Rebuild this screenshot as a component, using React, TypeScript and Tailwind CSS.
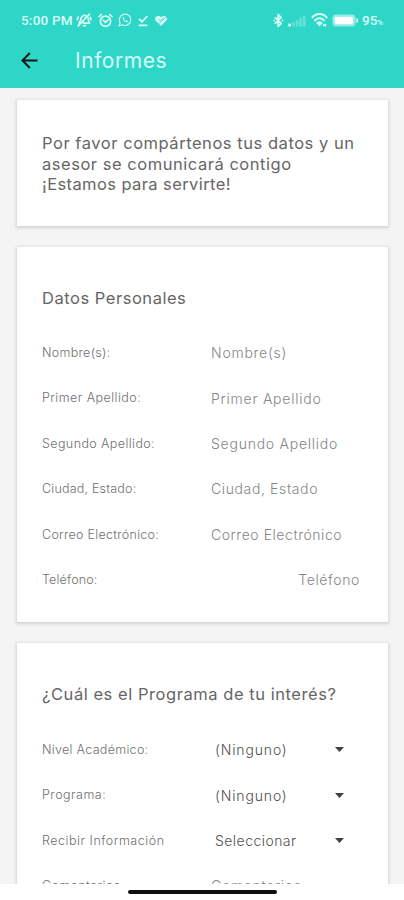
import type { ReactNode } from "react"

type Campo = {
  etiqueta: string
  etiquetaClass: string
  valor: string
  valorClass: string
}

const datosPersonales: Campo[] = [
  { etiqueta: "Nombre(s):", etiquetaClass: "tracking-[0.3px]", valor: "Nombre(s)", valorClass: "tracking-[0.75px]" },
  { etiqueta: "Primer Apellido:", etiquetaClass: "tracking-[0.45px]", valor: "Primer Apellido", valorClass: "tracking-[0.77px]" },
  { etiqueta: "Segundo Apellido:", etiquetaClass: "tracking-[0.4px]", valor: "Segundo Apellido", valorClass: "tracking-[0.75px]" },
  { etiqueta: "Ciudad, Estado:", etiquetaClass: "tracking-[0.2px]", valor: "Ciudad, Estado", valorClass: "tracking-[0.62px]" },
  { etiqueta: "Correo Electrónico:", etiquetaClass: "tracking-[0.28px]", valor: "Correo Electrónico", valorClass: "tracking-[0.55px]" },
  { etiqueta: "Teléfono:", etiquetaClass: "tracking-[0.15px]", valor: "Teléfono", valorClass: "tracking-[0.65px] ml-auto mr-[3px]" },
]

const programa: Campo[] = [
  { etiqueta: "Nivel Académico:", etiquetaClass: "tracking-[0.3px]", valor: "(Ninguno)", valorClass: "tracking-[0.85px]" },
  { etiqueta: "Programa:", etiquetaClass: "tracking-[0.5px]", valor: "(Ninguno)", valorClass: "tracking-[0.85px]" },
  { etiqueta: "Recibir Información", etiquetaClass: "tracking-[0.53px]", valor: "Seleccionar", valorClass: "tracking-[0.45px]" },
]

function StatusBar() {
  return (
    <div className="flex h-10 items-center pl-[21px] pr-5 text-[#d9fdf8]">
      <span className="w-[53px] shrink-0 whitespace-nowrap font-[Roboto] text-[13.5px] font-medium tracking-[0.2px]">5:00 PM</span>
      <svg className="ml-[2px] h-4 w-4" viewBox="0 0 16 16" fill="none" stroke="currentColor" strokeWidth="1.7" strokeLinecap="round" strokeLinejoin="round">
        <path d="M3 10.8 4.6 8.4C4.8 4.6 7.2 3 9.6 3.6M12.2 6c.5 2-.2 3.200 1.400 5.200H7.400M2.200 13.800 13.400 2.200M7.400 13.600h2.200M1.200 7.600l1-2.600M15 7.400l-.6-2" />
      </svg>
      <svg className="ml-[6px] h-[15px] w-[15px]" viewBox="0 0 16 16" fill="none" stroke="currentColor" strokeWidth="1.8" strokeLinecap="round">
        <circle cx="8" cy="8.8" r="5.5" />
        <path d="m1.200 3.800 2.400-2.200M14.800 3.800l-2.400-2.200M5.600 7.800 8 10l2.800-2.600" />
      </svg>
      <svg className="ml-[5px] h-[14px] w-[14px]" viewBox="0 0 16 16" fill="none" stroke="currentColor" strokeWidth="1.3">
        <path d="m1.400 14.600 1-3.600a6.500 6.500 0 1 1 2.600 2.500z" />
        <path d="M5.700 4.800c-1.200 2.200 2.600 6.600 5.200 5.700l.4-1.300-1.700-.8-.8.8c-1-.4-1.700-1.200-2-2l.6-.8-.7-1.600z" fill="currentColor" stroke="none" />
      </svg>
      <svg className="ml-[5px] h-[13px] w-[12px]" viewBox="0 0 12 13" fill="none" stroke="currentColor" strokeWidth="1.7">
        <path d="m2 4.800 3 3L10.400 2M1.600 11.400h8.800" />
      </svg>
      <svg className="ml-[5px] h-[13px] w-[14px]" viewBox="0 0 14 13" fill="none">
        <path d="M7 12 1.600 6.400C-.6 3.200 4 .2 7 3.200c3-3 7.600 0 5.400 3.200z" fill="currentColor" />
        <path d="M4.200 4.800 6.400 6.800 10 3.400M4.600 9.800 11.800 3.400" stroke="#2ed6c8" strokeWidth="0.8" />
      </svg>
      <svg className="ml-auto h-[15px] w-[11px]" viewBox="0 0 11 15" fill="none" stroke="currentColor" strokeWidth="1.7" strokeLinejoin="round">
        <path d="m1.800 4.300 6.400 6L5.200 13.400V1.600l3 3.100-6.400 6" />
        <path d="M.4 7.500h1.400M8.800 7.500h1.400" />
      </svg>
      <svg className="ml-[4px] h-[13px] w-[18px]" viewBox="0 0 18 13" fill="currentColor">
        <rect x="0" y="9.500" width="3" height="3" rx="1" />
        <g opacity="0.3">
          <rect x="4" y="8" width="2.800" height="4.500" rx="0.6" />
          <rect x="7.600" y="6" width="2.800" height="6.500" rx="0.6" />
          <rect x="11.200" y="4" width="2.800" height="8.500" rx="0.6" />
          <rect x="14.800" y="1.500" width="2.800" height="11" rx="0.6" />
        </g>
      </svg>
      <svg className="ml-[5px] h-[14px] w-[17px]" viewBox="0 0 17 14" fill="none" stroke="currentColor" strokeWidth="2">
        <path d="M.8 5C5-.2 12-.2 16.200 5M3.400 7.800c3-3.500 7.200-3.500 10.200 0" />
        <path d="M5.200 9.800c2-2.200 4.600-2.200 6.600 0l-3.300 3.800z" fill="currentColor" stroke="none" />
        <path d="M12.200 11.200l3 2M15.200 11l-3 2.200" strokeWidth="1.200" />
      </svg>
      <svg className="ml-[4px] h-[13px] w-[27px]" viewBox="0 0 27 13" fill="none">
        <rect x="0.500" y="0.500" width="23" height="12" rx="4" fill="currentColor" opacity="0.6" />
        <rect x="2.800" y="2.800" width="18.400" height="7.400" rx="2" fill="white" />
        <path d="M24.400 4c2.400.6 2.400 4.400 0 5z" fill="currentColor" />
      </svg>
      <span className="ml-[3px] w-[22px] whitespace-nowrap font-[Roboto] text-[13.5px] font-medium">
        95<span className="text-[8px]">%</span>
      </span>
    </div>
  )
}

function Tarjeta({ className, children }: { className: string; children: ReactNode }) {
  return (
    <section className={`shrink-0 bg-white px-[25px] shadow-[0_1px_3px_1px_rgba(0,0,0,0.14)] ${className}`}>
      {children}
    </section>
  )
}

function Etiqueta({ campo }: { campo: Campo }) {
  return (
    <span className="w-[169px] shrink-0 whitespace-nowrap pt-[1.5px] text-[12.5px] font-light text-[#707070]">
      <span className={campo.etiquetaClass}>{campo.etiqueta}</span>
    </span>
  )
}

export default function App() {
  return (
    <div className="flex h-[900px] w-[404px] flex-col overflow-hidden bg-white font-['Inter',sans-serif]">
      <header className="h-[88px] shrink-0 bg-[#2ed6c8]">
        <StatusBar />
        <div className="flex h-10 items-center pl-[21px]">
          <button type="button" aria-label="Regresar">
            <svg className="h-[17px] w-[17px]" viewBox="0 0 17 17" fill="none" stroke="#101817" strokeWidth="2">
              <path d="M16.5 8.5H2M8.8 1 1.5 8.5l7.300 7.500" />
            </svg>
          </button>
          <h1 className="ml-[37px] pt-0.5 text-[21px] font-normal tracking-[0.55px] text-[#d5fcf6]">Informes</h1>
        </div>
      </header>

      <main className="flex h-[796px] shrink-0 flex-col gap-[21px] overflow-hidden bg-[#f4f4f4] pl-[17px] pr-4 pt-3">
        <Tarjeta className="h-[126px] pt-[33px]">
          <p className="whitespace-nowrap text-[16.5px] leading-[20.5px] text-[#666666]">
            <span className="tracking-[0.54px]">Por favor compártenos tus datos y un</span>
            <br />
            <span className="tracking-[0.53px]">asesor se comunicará contigo</span>
            <br />
            <span className="tracking-[0.4px]">¡Estamos para servirte!</span>
          </p>
        </Tarjeta>

        <Tarjeta className="h-[375px] pt-[41px]">
          <h2 className="mb-[22px] whitespace-nowrap text-[16.5px] leading-5 tracking-[0.53px] text-[#666666]">Datos Personales</h2>
          {datosPersonales.map((campo) => (
            <div key={campo.etiqueta} className="flex h-[45.4px] items-center">
              <Etiqueta campo={campo} />
              <span className={`whitespace-nowrap text-[14px] font-light text-[#858585] ${campo.valorClass}`}>{campo.valor}</span>
            </div>
          ))}
        </Tarjeta>

        <Tarjeta className="h-[340px] pt-[41px]">
          <h2 className="mb-[23px] whitespace-nowrap text-[16.5px] leading-5 tracking-[0.55px] text-[#666666]">¿Cuál es el Programa de tu interés?</h2>
          {programa.map((campo) => (
            <div key={campo.etiqueta} className="flex h-[45.4px] items-center">
              <Etiqueta campo={campo} />
              <button type="button" className="flex w-[133px] items-center justify-between pl-1 text-[14px] font-light text-[#505050]">
                <span className={`whitespace-nowrap ${campo.valorClass}`}>{campo.valor}</span>
                <svg className="h-[5px] w-[9px]" viewBox="0 0 9 5" fill="#404040">
                  <path d="M0 0h9L4.5 5z" />
                </svg>
              </button>
            </div>
          ))}
          <div className="flex h-[45.4px] items-center">
            <span className="w-[169px] shrink-0 pt-[1.5px] text-[12.5px] font-light tracking-[0.4px] text-[#707070]">Comentarios</span>
            <span className="text-[14px] font-light tracking-[0.7px] text-[#858585]">Comentarios</span>
          </div>
        </Tarjeta>
      </main>

      <div className="flex h-4 shrink-0 justify-center bg-white pt-[6px]">
        <div className="h-1 w-[149px] rounded-full bg-[#101010]" />
      </div>
    </div>
  )
}
